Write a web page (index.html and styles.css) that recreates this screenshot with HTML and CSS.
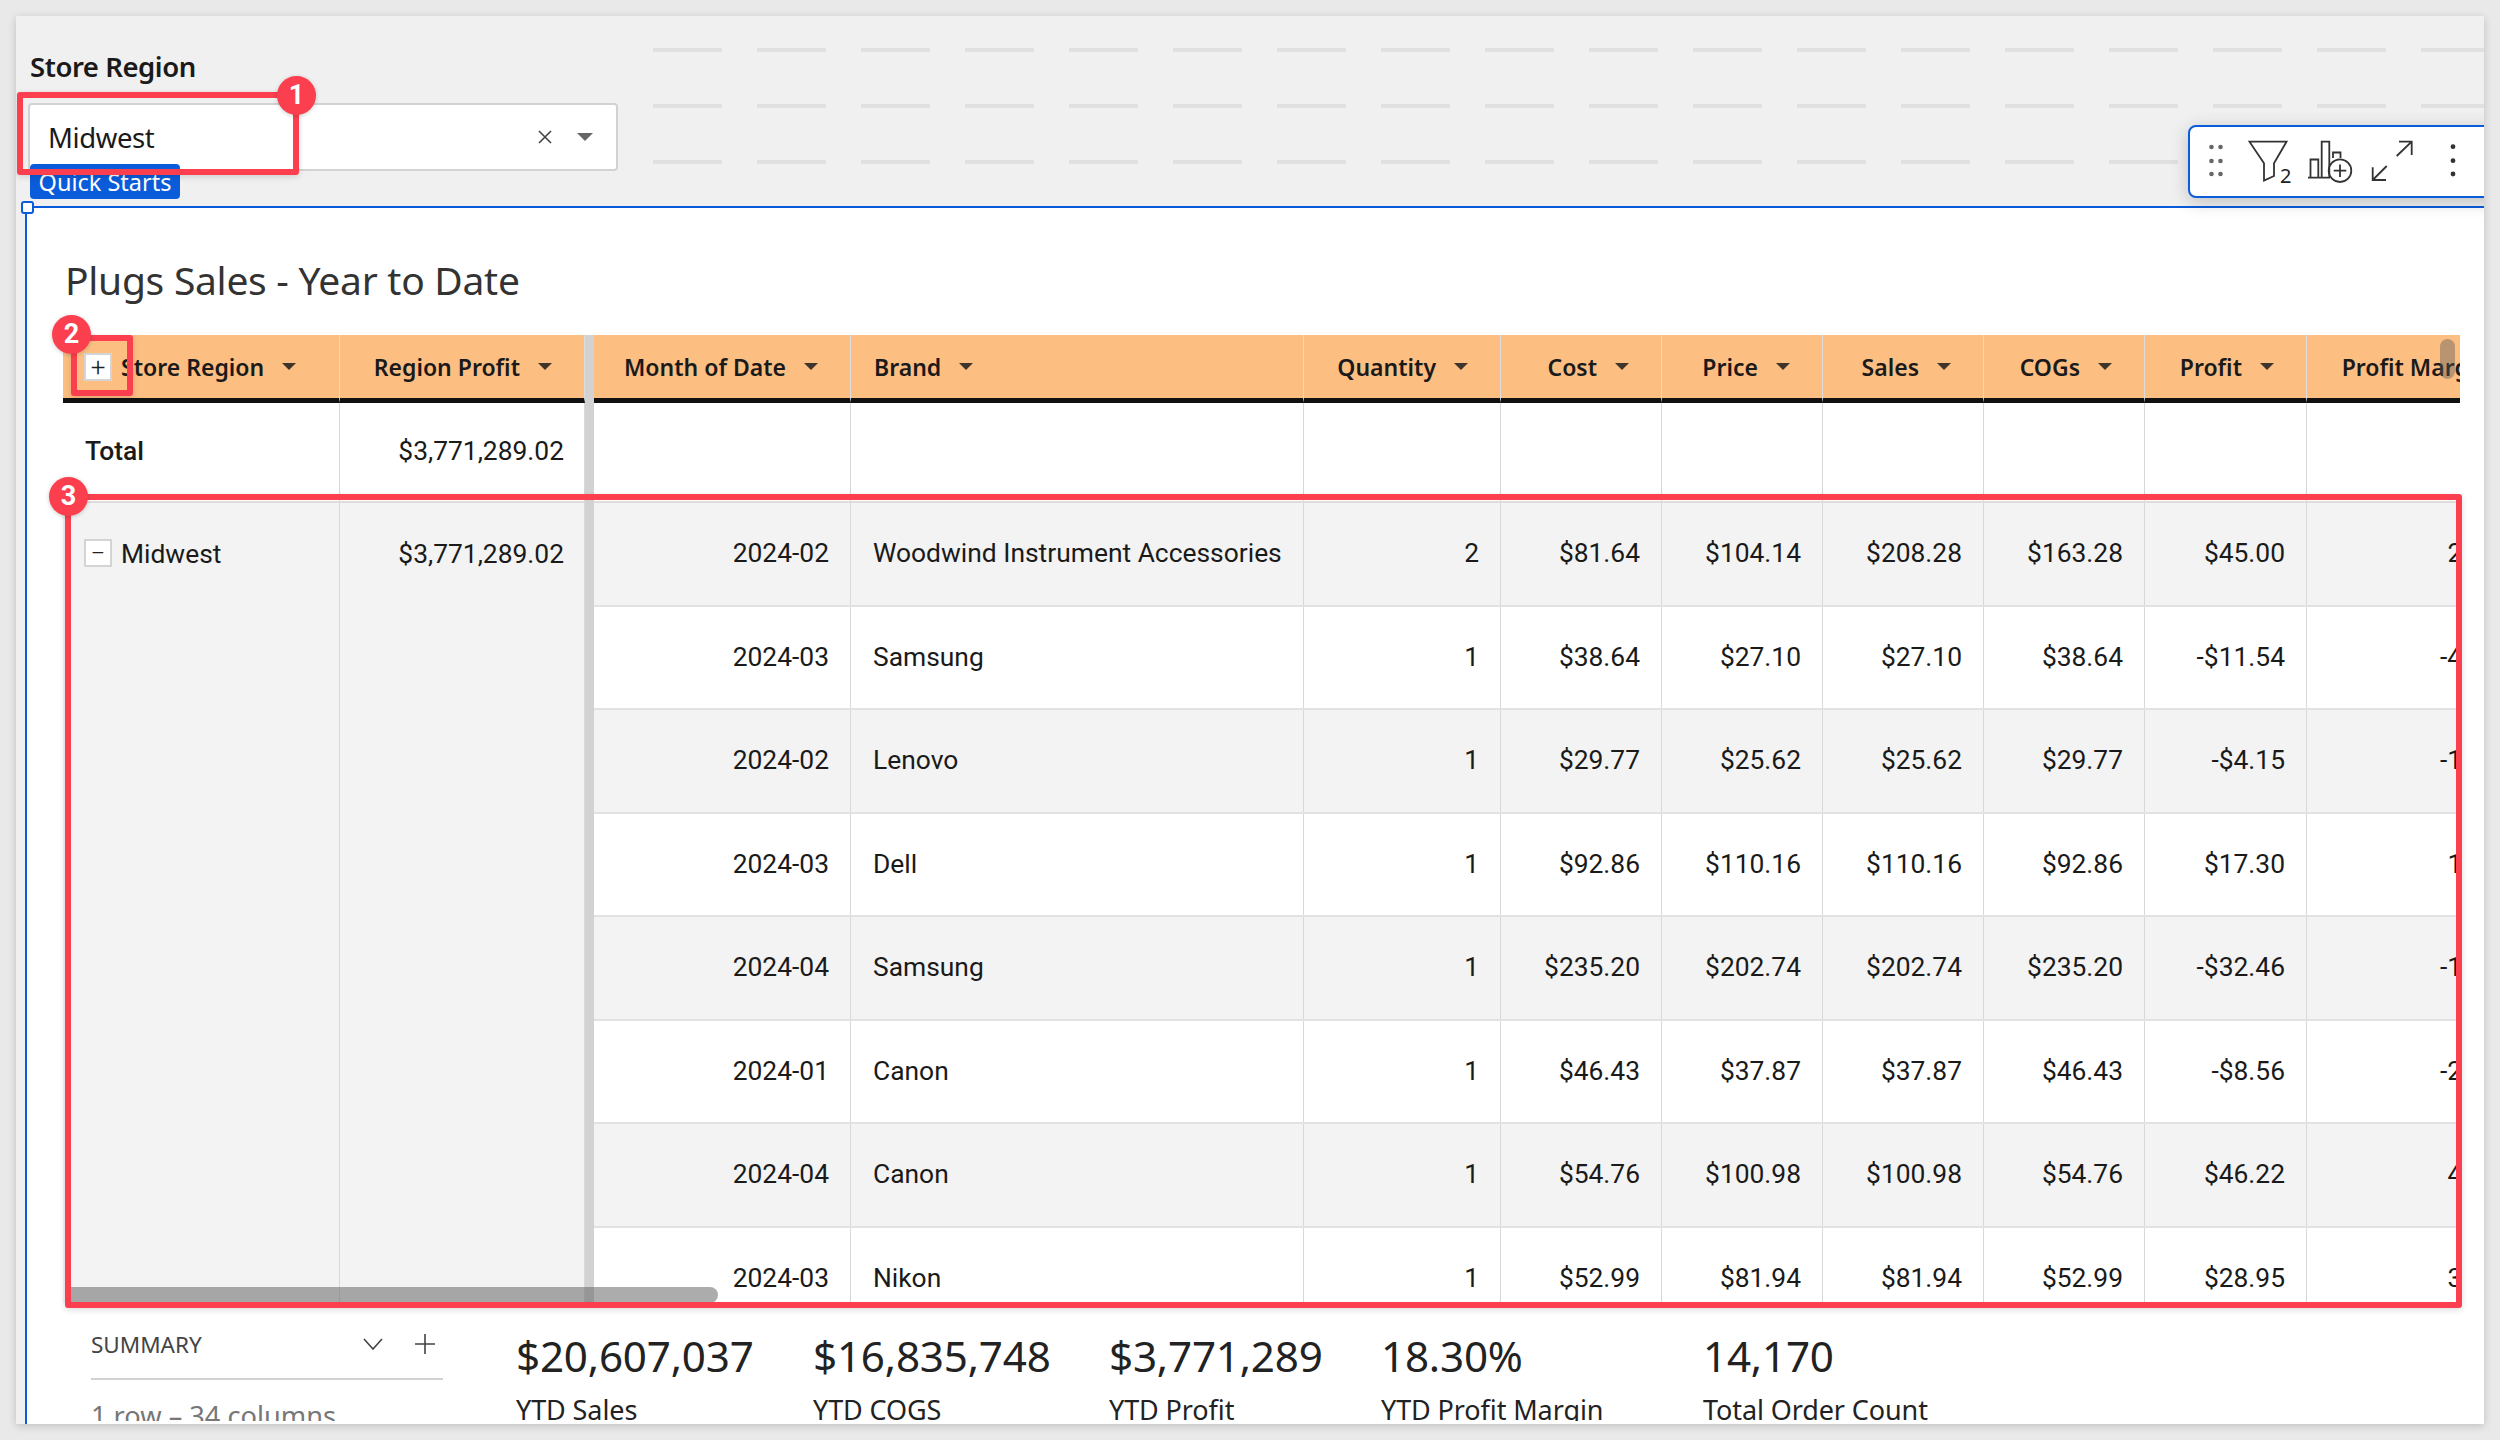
FILE: index.html
```html
<!DOCTYPE html>
<html lang="en">
<head>
<meta charset="utf-8">
<title>Plugs Sales - Year to Date</title>
<link rel="stylesheet" href="styles.css">
</head>
<body>
<main class="page">
  <section class="controls">
    <div class="control">
      <div class="control-label">Store Region</div>
      <div class="select">
        <span class="select-value">Midwest</span>
        <svg class="select-x" viewBox="0 0 14 14"><path d="M1 1L13 13M13 1L1 13"/></svg>
        <span class="select-caret"></span>
      </div>
    </div>
    <div class="dashes"></div>
  </section>

  <section class="panel">
    <span class="tag">Quick Starts</span>
    <span class="handle"></span>
    <h1 class="title">Plugs Sales - Year to Date</h1>

    <div class="table">
      <div class="frozen">
        <div class="row frozen-cols head">
          <div class="th th-left th-region"><span class="expander">+</span>Store Region<span class="caret"></span></div>
          <div class="th">Region Profit<span class="caret"></span></div>
        </div>
        <div class="row frozen-cols total">
          <div class="td td-left strong total-label">Total</div>
          <div class="td td-profit">$3,771,289.02</div>
        </div>
        <div class="frozen-cols group">
          <div class="td td-left group-label"><span class="expander">−</span>Midwest</div>
          <div class="td td-profit group-value">$3,771,289.02</div>
        </div>
      </div>
      <div class="freeze"></div>
      <div class="scroll">
        <div class="row cols head">
          <div class="th">Month of Date<span class="caret"></span></div>
          <div class="th th-left">Brand<span class="caret"></span></div>
          <div class="th">Quantity<span class="caret"></span></div>
          <div class="th">Cost<span class="caret"></span></div>
          <div class="th">Price<span class="caret"></span></div>
          <div class="th">Sales<span class="caret"></span></div>
          <div class="th">COGs<span class="caret"></span></div>
          <div class="th">Profit<span class="caret"></span></div>
          <div class="th">Profit Margin<span class="caret"></span></div>
        </div>
        <div class="row cols total">
          <div class="td"></div><div class="td"></div><div class="td"></div><div class="td"></div><div class="td"></div><div class="td"></div><div class="td"></div><div class="td"></div><div class="td"></div>
        </div>
        <div class="row cols data alt">
          <div class="td">2024-02</div><div class="td td-left">Woodwind Instrument Accessories</div><div class="td">2</div><div class="td">$81.64</div><div class="td">$104.14</div><div class="td">$208.28</div><div class="td">$163.28</div><div class="td">$45.00</div><div class="td">21.61%</div>
        </div>
        <div class="row cols data">
          <div class="td">2024-03</div><div class="td td-left">Samsung</div><div class="td">1</div><div class="td">$38.64</div><div class="td">$27.10</div><div class="td">$27.10</div><div class="td">$38.64</div><div class="td">-$11.54</div><div class="td">-42.58%</div>
        </div>
        <div class="row cols data alt">
          <div class="td">2024-02</div><div class="td td-left">Lenovo</div><div class="td">1</div><div class="td">$29.77</div><div class="td">$25.62</div><div class="td">$25.62</div><div class="td">$29.77</div><div class="td">-$4.15</div><div class="td">-16.20%</div>
        </div>
        <div class="row cols data">
          <div class="td">2024-03</div><div class="td td-left">Dell</div><div class="td">1</div><div class="td">$92.86</div><div class="td">$110.16</div><div class="td">$110.16</div><div class="td">$92.86</div><div class="td">$17.30</div><div class="td">15.70%</div>
        </div>
        <div class="row cols data alt">
          <div class="td">2024-04</div><div class="td td-left">Samsung</div><div class="td">1</div><div class="td">$235.20</div><div class="td">$202.74</div><div class="td">$202.74</div><div class="td">$235.20</div><div class="td">-$32.46</div><div class="td">-16.01%</div>
        </div>
        <div class="row cols data">
          <div class="td">2024-01</div><div class="td td-left">Canon</div><div class="td">1</div><div class="td">$46.43</div><div class="td">$37.87</div><div class="td">$37.87</div><div class="td">$46.43</div><div class="td">-$8.56</div><div class="td">-22.60%</div>
        </div>
        <div class="row cols data alt">
          <div class="td">2024-04</div><div class="td td-left">Canon</div><div class="td">1</div><div class="td">$54.76</div><div class="td">$100.98</div><div class="td">$100.98</div><div class="td">$54.76</div><div class="td">$46.22</div><div class="td">45.77%</div>
        </div>
        <div class="row cols data">
          <div class="td">2024-03</div><div class="td td-left">Nikon</div><div class="td">1</div><div class="td">$52.99</div><div class="td">$81.94</div><div class="td">$81.94</div><div class="td">$52.99</div><div class="td">$28.95</div><div class="td">35.33%</div>
        </div>
      </div>
      <div class="hbar"></div>
      <div class="vbar"></div>
    </div>

    <div class="footer">
      <div class="summary">
        <div class="summary-head">
          <span class="summary-title">SUMMARY</span>
          <svg class="summary-chevron" viewBox="0 0 20 12"><path d="M1 1L10 11L19 1"/></svg>
          <svg class="summary-plus" viewBox="0 0 20 20"><path d="M10 0V20M0 10H20"/></svg>
        </div>
        <div class="summary-meta">1 row – 34 columns</div>
      </div>
      <div class="kpis">
        <div class="kpi kpi-a"><div class="kpi-value">$20,607,037</div><div class="kpi-label">YTD Sales</div></div>
        <div class="kpi kpi-b"><div class="kpi-value">$16,835,748</div><div class="kpi-label">YTD COGS</div></div>
        <div class="kpi kpi-c"><div class="kpi-value">$3,771,289</div><div class="kpi-label">YTD Profit</div></div>
        <div class="kpi kpi-d"><div class="kpi-value">18.30%</div><div class="kpi-label">YTD Profit Margin</div></div>
        <div class="kpi"><div class="kpi-value">14,170</div><div class="kpi-label">Total Order Count</div></div>
      </div>
    </div>
  </section>

  <div class="toolbar">
    <svg class="tool tool-grip" viewBox="106 48 20 48"><g class="fill-grey"><circle cx="111.5" cy="57" r="2.3"/><circle cx="120.5" cy="57" r="2.3"/><circle cx="111.5" cy="71" r="2.3"/><circle cx="120.5" cy="71" r="2.3"/><circle cx="111.5" cy="84" r="2.3"/><circle cx="120.5" cy="84" r="2.3"/></g></svg>
    <div class="tool-filter">
      <svg class="tool tool-funnel" viewBox="146 48 46 48"><path class="line" d="M149.5 51.7H186.5L174 73.3V86L164 90.5V73.3Z"/></svg>
      <span class="filter-count">2</span>
    </div>
    <svg class="tool tool-chart" viewBox="206 48 48 48"><path class="line" d="M208 87.7H230M210.5 87.7V69.5H218.3V87.7M221.7 87.7V51.7H229.3V87.7M233 68V62.5H240.5V68"/><circle class="line" cx="240" cy="80.7" r="11.3"/><path class="line" d="M240 74.5V87M233.7 80.7H246.3"/></svg>
    <svg class="tool tool-expand" viewBox="270 48 44 48"><path class="line" d="M296.7 66L311.7 51.7M299 51.7H311.7V65M286.7 76L272.7 90M272.7 77.3V90H286"/></svg>
    <svg class="tool tool-kebab" viewBox="348 48 10 48"><g class="fill-dark"><circle cx="353" cy="56.7" r="2.4"/><circle cx="353" cy="70.7" r="2.4"/><circle cx="353" cy="84" r="2.4"/></g></svg>
  </div>

  <div class="mark mark-1"></div>
  <div class="mark mark-2"></div>
  <div class="mark mark-3"></div>
  <span class="badge badge-1">1</span>
  <span class="badge badge-2">2</span>
  <span class="badge badge-3">3</span>
</main>
</body>
</html>
```

FILE: styles.css
```css
* { box-sizing: border-box; }

html, body { margin: 0; height: 100%; }

body {
  background: #e9e9e9;
  padding: 16px;
  font-family: "Noto Sans", sans-serif;
  color: #1a1a1a;
  overflow: hidden;
}

.page {
  position: relative;
  width: 2468px;
  height: 1408px;
  background: #f0f0f0;
  overflow: hidden;
  box-shadow: 0 2px 8px rgba(0, 0, 0, .18);
  display: flex;
  flex-direction: column;
}

/* Controls strip */
.controls { display: flex; height: 190px; flex: none; }
.control { width: 637px; flex: none; padding: 29px 0 0 12px; }
.control-label {
  font-size: 27.5px;
  font-weight: 600;
  line-height: 44px;
  padding-left: 2px;
  height: 58px;
  letter-spacing: -.45px;
}
.select {
  width: 590px;
  height: 68px;
  background: #fff;
  border: 2px solid #d2d2d2;
  border-radius: 4px;
  display: flex;
  align-items: center;
  padding-left: 18px;
}
.select-value { flex: 1; font-size: 27.5px; letter-spacing: -.4px; color: #1a1a1a; }
.select-x { width: 14px; height: 14px; fill: none; stroke: #444; stroke-width: 1.6; margin-right: 25px; }
.select-caret {
  width: 0;
  height: 0;
  border-left: 8px solid transparent;
  border-right: 8px solid transparent;
  border-top: 8px solid #666;
  margin-right: 23px;
}
.dashes {
  flex: 1;
  background-image:
    linear-gradient(90deg, #e0e0e0 69px, transparent 69px),
    linear-gradient(90deg, #e0e0e0 69px, transparent 69px),
    linear-gradient(90deg, #e0e0e0 69px, transparent 69px);
  background-size: 104px 4px;
  background-position: 0 32px, 0 88px, 0 144px;
  background-repeat: repeat-x;
}

/* Panel */
.panel {
  position: relative;
  flex: 1;
  min-height: 0;
  margin-left: 8.5px;
  background: #fff;
  border-top: 2px solid #0b5cdb;
  border-left: 2px solid #0b5cdb;
  padding-left: 36.5px;
}
.tag {
  position: absolute;
  left: 3.5px;
  top: -44px;
  width: 150px;
  height: 35px;
  background: #0b5cdb;
  border-radius: 4px;
  color: #fff;
  font-size: 23.5px;
  line-height: 36px;
  text-align: center;
  overflow: hidden;
}
.handle {
  position: absolute;
  left: -6px;
  top: -7px;
  width: 13px;
  height: 13px;
  background: #fff;
  border: 2px solid #0b5cdb;
  border-radius: 3px;
}
.title {
  margin: 0 0 0 2px;
  height: 127px;
  padding-top: 44px;
  font-size: 39px;
  font-weight: 400;
  line-height: 56px;
  color: #333;
  letter-spacing: -.28px;
}

/* Table */
.table { position: relative; display: flex; width: 2397px; height: 968px; overflow: hidden; }
.frozen { width: 522px; flex: none; display: flex; flex-direction: column; }
.freeze { width: 9px; flex: none; background: #d2d2d2; }
.scroll { flex: 1; min-width: 0; overflow: hidden; }

.row { display: grid; }
.frozen-cols { display: grid; grid-template-columns: 277px 245px; }
.cols { grid-template-columns: 257px 453px 197px 161px 161px 161px 161px 162px 248px; width: 1961px; }

.head { height: 68px; }
.total { height: 100px; border-bottom: 2px solid #dcdcdc; }
.total .td { padding-bottom: 2px; }
.data { height: 103.5px; border-bottom: 2px solid #e2e2e2; background: #fff; }
.data .td { padding-bottom: 1px; }
.alt { background: #f3f3f3; }
.group { flex: 1; background: #f3f3f3; }

.th {
  display: flex;
  align-items: center;
  justify-content: flex-end;
  gap: 18px;
  padding: 0 32px 0 0;
  background: #fdbe82;
  border-bottom: 5px solid #111;
  border-right: 1px solid #dcdcdc;
  font-size: 23px;
  font-weight: 600;
  color: #1a1a1a;
  white-space: nowrap;
}
.th-left { justify-content: flex-start; padding-left: 23px; }
.th-region { padding-left: 21px; gap: 0; }
.th-region .caret { margin-left: 18px; }
.th-region .expander { margin-right: 9px; }
.caret {
  flex: none;
  width: 0;
  height: 0;
  border-left: 7px solid transparent;
  border-right: 7px solid transparent;
  border-top: 7px solid #3f352c;
}

.td {
  display: flex;
  align-items: center;
  justify-content: flex-end;
  padding: 0 21px 0 22px;
  font-family: Roboto, sans-serif;
  font-size: 26.4px;
  color: #1a1a1a;
  border-right: 1px solid #d8d8d8;
  white-space: nowrap;
}
.td-left { justify-content: flex-start; }
.td-profit { padding-right: 20px; }
.strong { font-weight: 500; }
.total-label { padding-left: 22px; }
.group-label { align-items: flex-start; padding: 36px 0 0 21px; line-height: 30px; }
.group-value { align-items: flex-start; padding-top: 36px; line-height: 30px; }

.expander {
  flex: none;
  width: 28px;
  height: 28px;
  margin-right: 9px;
  background: #fff;
  border: 2px solid #d4d4d4;
  display: flex;
  align-items: center;
  justify-content: center;
  font-family: Roboto, sans-serif;
  font-size: 26px;
  font-weight: 300;
  line-height: 1;
  color: #222;
}

.hbar {
  position: absolute;
  left: 7px;
  bottom: 0;
  width: 648px;
  height: 16px;
  background: rgba(90, 90, 90, .5);
  border-radius: 0 8px 8px 0;
}
.vbar {
  position: absolute;
  right: 5px;
  top: 4px;
  width: 15px;
  height: 40px;
  background: rgba(90, 90, 90, .42);
  border-radius: 8px;
}

/* Footer */
.footer { display: flex; padding: 24px 0 0 28px; height: 118px; overflow: hidden; }
.summary { width: 352px; flex: none; margin-right: 73px; }
.summary-head {
  display: flex;
  align-items: center;
  height: 56px;
  padding-bottom: 14px;
  border-bottom: 2px solid #d2d2d2;
  margin-top: -3px;
}
.summary-title { flex: 1; font-size: 22.5px; color: #444; }
.summary-chevron { width: 20px; height: 12px; fill: none; stroke: #444; stroke-width: 1.6; margin-right: 32px; }
.summary-plus { width: 20px; height: 20px; fill: none; stroke: #444; stroke-width: 1.6; margin-right: 8px; }
.summary-meta { font-size: 27.2px; line-height: 34px; margin-top: 19px; color: #777; white-space: nowrap; }

.kpis { display: flex; margin-top: 1px; }
.kpi { flex: none; white-space: nowrap; }
.kpi-a { width: 297px; }
.kpi-b { width: 296px; }
.kpi-c { width: 272px; }
.kpi-d { width: 322px; }
.kpi-value { font-size: 42.2px; line-height: 56px; color: #222; letter-spacing: -.2px; }
.kpi-label { font-size: 27px; line-height: 38px; margin-top: 7px; color: #222; letter-spacing: -.1px; }

/* Toolbar */
.toolbar {
  position: absolute;
  left: 2172px;
  top: 109px;
  width: 320px;
  height: 73px;
  background: #fff;
  border: 2px solid #0b5cdb;
  border-radius: 8px;
  box-shadow: 0 4px 18px rgba(0, 0, 0, .2);
  display: flex;
  align-items: center;
  padding-left: 16px;
}
.tool { display: block; flex: none; height: 48px; }
.tool-grip { width: 20px; margin-right: 20px; }
.tool-filter { position: relative; display: flex; margin-right: 14px; }
.tool-funnel { width: 46px; }
.filter-count {
  position: absolute;
  left: 34px;
  top: 25px;
  font-size: 20px;
  line-height: 26px;
  color: #222;
}
.tool-chart { width: 48px; margin-right: 16px; }
.tool-expand { width: 44px; margin-right: 34px; }
.tool-kebab { width: 10px; }
.line { fill: none; stroke: #333; stroke-width: 1.8; }
.fill-grey { fill: #666; }
.fill-dark { fill: #333; }

/* Annotations */
.mark {
  position: absolute;
  border: 6px solid #fb3f4e;
  border-radius: 3px;
  box-shadow: 0 2px 6px rgba(0, 0, 0, .14);
}
.mark-1 { left: 1px; top: 76px; width: 282px; height: 83px; }
.mark-2 { left: 55px; top: 319px; width: 62px; height: 61px; }
.mark-3 { left: 49px; top: 478px; width: 2397px; height: 814px; }
.badge {
  position: absolute;
  width: 39px;
  height: 39px;
  border-radius: 50%;
  background: #fb3f4e;
  color: #fff;
  font-family: Roboto, sans-serif;
  font-size: 27px;
  font-weight: 700;
  line-height: 39px;
  text-align: center;
  box-shadow: 0 1px 4px rgba(0, 0, 0, .2);
}
.badge-1 { left: 261px; top: 60px; }
.badge-2 { left: 36px; top: 299px; }
.badge-3 { left: 33px; top: 461px; }
```
